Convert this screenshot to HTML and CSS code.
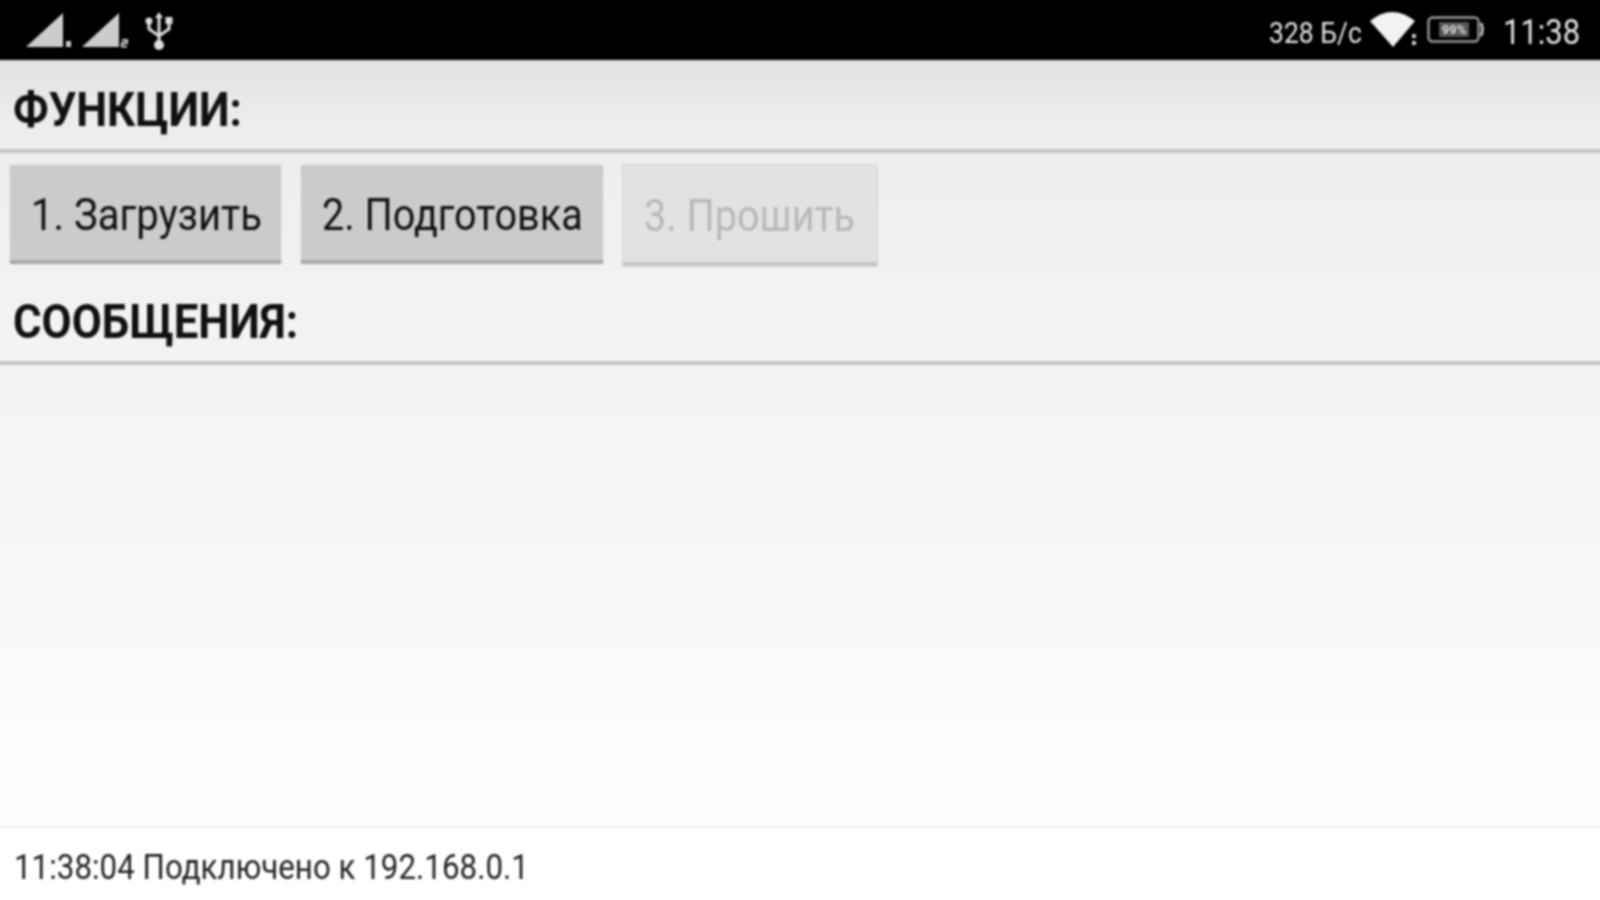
FILE: index.html
```html
<!DOCTYPE html>
<html lang="ru">
<head>
<meta charset="utf-8">
<title>Функции</title>
<link rel="stylesheet" href="styles.css">
</head>
<body>
<div class="status">
  <div class="status-left">
    <svg class="sig" viewBox="0 0 48 36"><path d="M0 34 37 0v34z" fill="#ccc"/><rect x="40" y="28" width="5" height="6" fill="#ccc"/></svg>
    <svg class="sig" viewBox="0 0 48 36"><path d="M0 34 37 0v34z" fill="#ccc"/><path d="M40 27h5v3h-5v3.500h5" fill="none" stroke="#ccc" stroke-width="2"/></svg>
    <svg class="usb" viewBox="0 0 28 38"><g fill="none" stroke="#ddd" stroke-width="3"><path d="M14 4v30M4 11v6l10 7 10-7v-6"/></g><circle cx="14" cy="33" r="5" fill="#ddd"/><path d="M14 0l4 6h-8z" fill="#ddd"/><circle cx="4" cy="9" r="3.500" fill="#ddd"/><rect x="20.500" y="5" width="7" height="7" fill="#ddd"/></svg>
  </div>
  <div class="status-right">
    <span class="speed"><span class="narrow sp">328 Б/с</span></span>
    <svg class="wifi" viewBox="0 0 48 38"><path d="M0 10Q22-8 45 10L23 36z" fill="#f2f2f2"/><rect x="42" y="23" width="4" height="4" fill="#ccc"/><rect x="42" y="30" width="4" height="4" fill="#ccc"/></svg>
    <svg class="batt" viewBox="0 0 58 30"><rect x="1.500" y="2.500" width="50" height="24" rx="4" fill="none" stroke="#999" stroke-width="2.400"/><path d="M54 8q3 6 0 13" fill="none" stroke="#ccc" stroke-width="2.600"/><rect x="12" y="7" width="30" height="15" fill="#555"/><text x="27" y="19" text-anchor="middle" class="batt-text">99%</text></svg>
    <span class="clock"><span class="narrow sp">11:38</span></span>
  </div>
</div>
<main class="main">
  <h2 class="section func"><span class="narrow head">ФУНКЦИИ:</span></h2>
  <div class="buttons">
    <button class="btn b1" type="button"><span class="narrow head">1. Загрузить</span></button>
    <button class="btn b2" type="button"><span class="narrow head2">2. Подготовка</span></button>
    <button class="btn b3" type="button" disabled><span class="narrow head2">3. Прошить</span></button>
  </div>
  <h2 class="section msg"><span class="narrow head">СООБЩЕНИЯ:</span></h2>
  <div class="spacer"></div>
  <div class="log"><span class="narrow">11:38:04 Подключено к 192.168.0.1</span></div>
</main>
</body>
</html>
```
FILE: styles.css
```css
* { box-sizing: border-box; }
html { height: 100%; overflow: hidden; background: #fff; }
body {
  margin: -4px;
  width: 1608px; height: 908px;
  display: flex; flex-direction: column;
  font-family: Roboto, "Liberation Sans", sans-serif;
  background: #fff;
  filter: blur(0.9px);
}
.narrow { display: inline-block; transform: scaleX(0.895); transform-origin: left center; white-space: nowrap; }
.narrow.head { transform: scaleX(0.91); }
.narrow.head2 { transform: scaleX(0.9); }
.narrow.sp { transform: scaleX(0.885); }
.status {
  height: 64px; padding-top: 4px; flex: none; background: #000;
  display: flex; justify-content: space-between; align-items: center;
  color: #e4e4e4;
}
.status-left { display: flex; align-items: center; padding-left: 30px; gap: 8px; }
.sig { width: 48px; height: 36px; margin-top: 2px; }
.usb { width: 28px; height: 38px; margin-left: 7px; margin-top: 2px; }
.status-right { display: flex; align-items: center; height: 100%; padding-right: 13px; }
.speed { font-size: 30px; width: 101px; margin-top: 4px; }
.wifi { width: 48px; height: 38px; }
.batt { width: 58px; height: 30px; margin-left: 9px; }
.batt-text { font: 700 13px Roboto, sans-serif; fill: #ddd; }
.clock { font-size: 35px; width: 88px; margin-left: 18px; margin-top: 4px; }
.main {
  flex: 1; display: flex; flex-direction: column;
  background: linear-gradient(#e2e2e2 0, #ededed 60px, #f3f3f3 250px, #f7f7f7 500px, #fefefe 740px, #fff 100%);
}
.section {
  margin: 0; padding-left: 17px;
  font-size: 48px; font-weight: 700; color: #111;
  border-bottom: 4px solid #c4c4c4;
  line-height: 56px;
}
.func { height: 93px; padding-top: 22px; }
.msg { height: 98px; padding-top: 27px; }
.buttons { display: flex; align-items: flex-start; gap: 20px; padding: 12px 0 0 14px; height: 114px; flex: none; }
.btn {
  height: 99px; border: 0; padding: 4px 0 0 21px; margin: 0; text-align: left;
  background: #cbcbcb; border-bottom: 4px solid #a9a9a9;
  font: 400 44px Roboto, sans-serif; color: #111;
  box-shadow: 0 0 2px #ddd;
}
.b1 { width: 271px; }
.b2 { width: 302px; }
.b3 { width: 254px; height: 101px; background: #e2e2e2; border-bottom-color: #c6c6c6; color: #b8b8b8; box-shadow: 0 0 0 1px #d6d6d6; }
.spacer { flex: 1; }
.log {
  height: 78px; flex: none; background: #fff; border-top: 2px solid #f0f0f0;
  padding: 19px 0 0 18px; font-size: 35px; line-height: 42px; color: #222;
}
```
